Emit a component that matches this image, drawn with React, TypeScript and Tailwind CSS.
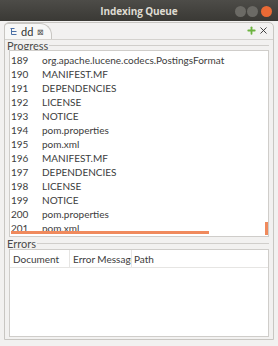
import { Plus, X } from 'lucide-react';

const rows: [number, string][] = [
  [189, 'org.apache.lucene.codecs.PostingsFormat'],
  [190, 'MANIFEST.MF'],
  [191, 'DEPENDENCIES'],
  [192, 'LICENSE'],
  [193, 'NOTICE'],
  [194, 'pom.properties'],
  [195, 'pom.xml'],
  [196, 'MANIFEST.MF'],
  [197, 'DEPENDENCIES'],
  [198, 'LICENSE'],
  [199, 'NOTICE'],
  [200, 'pom.properties'],
  [201, 'pom.xml'],
];

function TreeIcon() {
  return (
    <svg width="8" height="9" viewBox="0 0 8 9" className="shrink-0">
      <path d="M0.5 1.5h4M1.5 1.5v6M1.5 4.5h5M1.5 7.5h5" stroke="#4a6fa5" strokeWidth="1" fill="none" />
    </svg>
  );
}

export default function App() {
  return (
    <div
      className="w-[278px] h-[346px] bg-[#f2f1f0] flex flex-col text-[#3c3c3c] overflow-hidden"
      style={{ fontFamily: 'Lato, "Open Sans", sans-serif' }}
    >
      {/* title bar */}
      <div className="h-[21px] shrink-0 bg-gradient-to-b from-[#4d4c48] to-[#3a3935] flex items-center relative">
        <div
          className="flex-1 text-center text-[10px] font-bold text-[#dfdbd2] tracking-[-0.1px] pt-[2px]"
          style={{ fontFamily: '"Open Sans", sans-serif' }}
        >
          Indexing Queue
        </div>
        <div className="absolute right-[6px] top-[6px] flex gap-[1px]">
          <span className="w-[11px] h-[11px] rounded-full bg-[#6b6a65]" />
          <span className="w-[11px] h-[11px] rounded-full bg-[#6b6a65]" />
          <span className="w-[11px] h-[11px] rounded-full bg-[#ea6a35] ml-[2px]" />
        </div>
      </div>

      <div className="flex-1 min-h-0 flex flex-col px-[4px] pt-[1px] pb-[6px]">
        <div className="flex-1 min-h-0 flex flex-col border border-[#c8c6c2] rounded-t-[5px] bg-[#f2f1f0]">
          {/* tab row */}
          <div className="h-[17px] shrink-0 flex items-end justify-between border-b border-[#d4d2ce]">
            <div className="h-[16px] -ml-[1px] pl-[5px] flex items-center gap-[3px] bg-[#f7f7f6] border border-b-0 border-[#c8c6c2] rounded-tl-[4px] rounded-tr-[12px] w-[48px]">
              <TreeIcon />
              <span className="text-[11px] leading-none text-[#333]">dd</span>
              <span className="text-[8px] leading-none text-[#555] ml-[1px]">⊠</span>
            </div>
            <div className="flex items-center gap-[1px] pr-[4px] pb-[3px]">
              <Plus size={11} strokeWidth={4} color="#6cb33f" />
              <X size={11} strokeWidth={2} color="#333" />
            </div>
          </div>

          <div className="flex-1 min-h-0 flex flex-col px-[4px]">
            {/* Progress group */}
            <div className="h-[10px] shrink-0 flex items-center -ml-[2px]">
              <span className="text-[11px] leading-none text-[#4b4b4b]">Progress</span>
              <div className="flex-1 h-px bg-[#d0cecb] ml-[1px]" />
            </div>
            <div className="h-[187px] shrink-0 bg-white border border-[#cfcdca] relative overflow-hidden">
              <div className="flex flex-col pt-[2px]">
                {rows.map(([n, t]) => (
                  <div key={n} className="h-[14px] shrink-0 flex items-center text-[10px] leading-none text-[#3c3c3c]">
                    <span className="w-[32px] pl-[1px]">{n}</span>
                    <span className="whitespace-nowrap">{t}</span>
                  </div>
                ))}
              </div>
              <div className="absolute left-[1px] bottom-[2px] w-[198px] h-[3px] bg-[#f08a5d]" />
              <div className="absolute right-[0px] bottom-[1px] w-[3px] h-[13px] bg-[#f08a5d]" />
            </div>

            {/* Errors group */}
            <div className="h-[11px] shrink-0 mt-[1px] flex items-center -ml-[2px]">
              <span className="text-[11px] leading-none text-[#4b4b4b]">Errors</span>
              <div className="flex-1 h-px bg-[#d0cecb] ml-[1px]" />
            </div>
            <div className="flex-1 min-h-0 mb-[2px] bg-white border border-[#cfcdca] flex flex-col">
              <div className="h-[18px] shrink-0 flex text-[10px] leading-none border-b border-[#e6e5e3]">
                <div className="w-[60px] pl-[3px] flex items-center border-r border-[#e6e5e3]">Document</div>
                <div className="w-[62px] pl-[3px] flex items-center border-r border-[#e6e5e3] overflow-hidden whitespace-nowrap">Error Message</div>
                <div className="flex-1 pl-[2px] flex items-center">Path</div>
              </div>
            </div>
          </div>
        </div>
      </div>
    </div>
  );
}
